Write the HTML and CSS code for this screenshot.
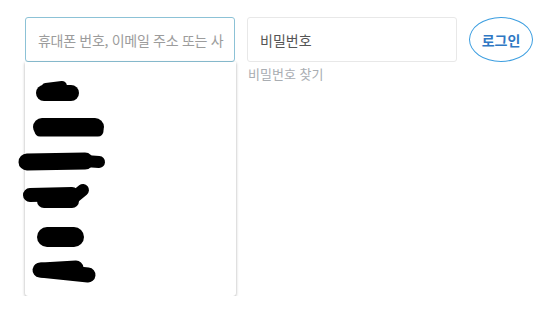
FILE: index.html
```html
<!DOCTYPE html>
<html lang="ko">
<head>
<meta charset="utf-8">
<link rel="stylesheet" href="styles.css">
</head>
<body>
<div class="login">
  <div class="field id-field">
    <div class="input focused"><span class="placeholder">휴대폰 번호, 이메일 주소 또는 사</span></div>
    <div class="dropdown"></div>
    <svg class="redact" width="120" height="240" viewBox="0 62 120 240">
      <g stroke="#000" stroke-linecap="round" stroke-linejoin="round" fill="none">
        <path d="M44 93 L71 93" stroke-width="16"/>
        <path d="M46 88 L62 86" stroke-width="10"/>
        <path d="M42 127 L95 127" stroke-width="18"/>
        <path d="M40 131 L98 131" stroke-width="11"/>
        <path d="M27 162 L85 161" stroke-width="17"/>
        <path d="M85 161 L99 162" stroke-width="12"/>
        <path d="M30 195 L72 194" stroke-width="14"/>
        <path d="M44 201 L72 201" stroke-width="14"/>
        <path d="M72 199 L83 190" stroke-width="12"/>
        <path d="M47 237 L74 237" stroke-width="20"/>
        <path d="M40 270 L88 275" stroke-width="15"/>
        <path d="M42 270 L76 268" stroke-width="15"/>
      </g>
    </svg>
  </div>
  <div class="field">
    <div class="input"><span class="value">비밀번호</span></div>
    <a class="find">비밀번호 찾기</a>
  </div>
  <button class="btn">로그인</button>
</div>
</body>
</html>
```
FILE: styles.css
```css
html, body {
  margin: 0;
  padding: 0;
  background: #fff;
}
body {
  font-family: "Noto Sans CJK KR", "Noto Sans", sans-serif;
}
.login {
  display: flex;
  align-items: flex-start;
  gap: 12px;
  padding: 17px 0 0 25px;
}
.field {
  position: relative;
  width: 210px;
  display: flex;
  flex-direction: column;
}
.input {
  box-sizing: border-box;
  height: 45px;
  border: 1px solid #e8e8e8;
  border-radius: 3px;
  display: flex;
  align-items: center;
  padding-left: 12px;
  font-size: 14px;
  white-space: nowrap;
  overflow: hidden;
}
.input.focused {
  border-color: #8cc2d6;
}
.placeholder {
  color: #9c9c9c;
  letter-spacing: -0.3px;
}
.value {
  color: #555;
}
.dropdown {
  width: 211px;
  height: 234px;
  background: #fff;
  border-radius: 0 0 3px 3px;
  box-shadow: 0 1px 3px rgba(0, 0, 0, 0.35);
}
.redact {
  position: absolute;
  left: -25px;
  top: 45px;
}
.find {
  margin-top: 2px;
  padding-left: 1px;
  font-size: 13px;
  color: #a9adb2;
}
.btn {
  box-sizing: border-box;
  width: 64px;
  height: 45px;
  border: 1px solid #3c9ee0;
  border-radius: 50%;
  background: #fff;
  color: #2f78c4;
  font-family: inherit;
  font-size: 14px;
  font-weight: bold;
  padding: 0;
}
```
